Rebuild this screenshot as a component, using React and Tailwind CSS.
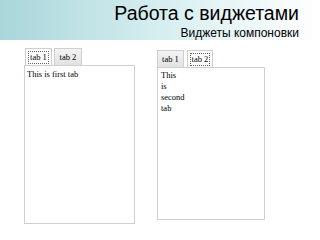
import React from "react";

function Tab({ label, active, focus, w }) {
  return (
    <div
      className={
        "flex items-center justify-center h-[17px] border border-[#cfcfcf] border-b-0 whitespace-nowrap " +
        w +
        (active ? " bg-white" : " bg-gradient-to-b from-[#f4f4f4] to-[#e2e2e2] mt-[1px] h-[16px]")
      }
    >
      <span
        className={
          "leading-[11px] px-[1px] " +
          (focus ? "border border-dotted border-[#666]" : "border border-transparent")
        }
      >
        {label}
      </span>
    </div>
  );
}

export default function App() {
  const serif = { fontFamily: '"Liberation Serif", "Times New Roman", serif' };
  return (
    <div className="w-[320px] h-[240px] bg-white overflow-hidden antialiased">
      <div
        className="h-[40px] bg-gradient-to-r from-[#a8d6da] via-[#d6eef0] to-white flex flex-col items-end pr-[21px] pt-[2px]"
        style={{ fontFamily: '"Liberation Sans", Arial, sans-serif' }}
      >
        <div className="text-[19.5px] leading-[22px] text-black">Работа с виджетами</div>
        <div className="text-[12px] leading-[13px] text-black mt-[3px]">Виджеты компоновки</div>
      </div>
      <div className="flex text-[8.5px] text-black" style={serif}>
        <div className="ml-[24px] mt-[7px] w-[111px] flex flex-col">
          <div className="flex items-end gap-[2px] pl-[1px]">
            <Tab label="tab 1" active focus w="w-[27px]" />
            <Tab label="tab 2" w="w-[28px]" />
          </div>
          <div className="h-[159px] border border-[#cfcfcf] pl-[2px] pt-[3px] leading-[11px]">
            This is first tab
          </div>
        </div>
        <div className="ml-[22px] mt-[9px] w-[108px] flex flex-col">
          <div className="flex items-end gap-[3px]">
            <Tab label="tab 1" w="w-[27px]" />
            <Tab label="tab 2" active focus w="w-[26px]" />
          </div>
          <div className="h-[153px] border border-[#cfcfcf] pl-[3px] pt-[2px] leading-[11px]">
            <div>This</div>
            <div>is</div>
            <div>second</div>
            <div>tab</div>
          </div>
        </div>
      </div>
    </div>
  );
}
